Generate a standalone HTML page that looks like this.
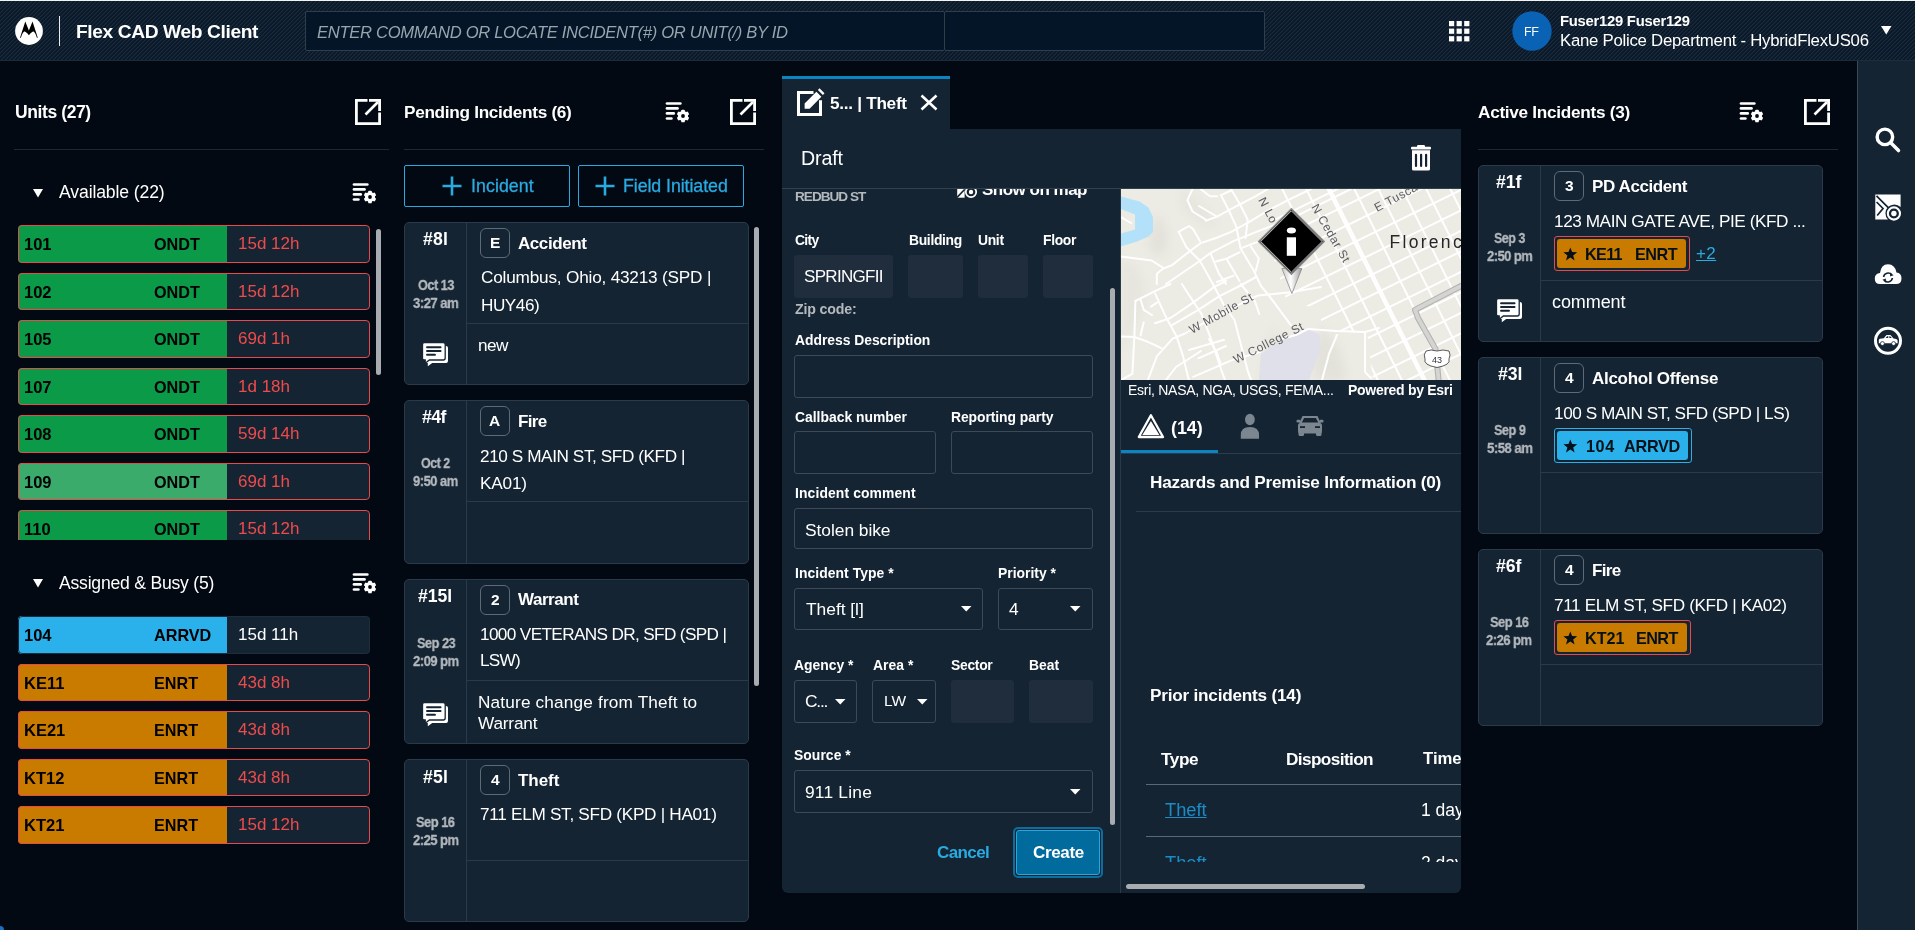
<!DOCTYPE html>
<html><head><meta charset="utf-8"><title>Flex CAD Web Client</title>
<style>
html,body{margin:0;padding:0;}
body{width:1915px;height:930px;overflow:hidden;background:#020912;font-family:"Liberation Sans",sans-serif;position:relative;}
div{position:absolute;}
.t{white-space:nowrap;will-change:transform;}
</style></head><body>
<div style="left:0;top:0;width:1915px;height:1px;background:#f2f2ee"></div>
<svg style="position:absolute;left:0;top:1px" width="1915" height="59" shape-rendering="crispEdges"><defs><pattern id="hs" width="4" height="4" patternUnits="userSpaceOnUse"><rect width="4" height="4" fill="#0a1929"/><rect x="3" y="0" width="1" height="1" fill="#1a2b3a"/><rect x="2" y="1" width="1" height="1" fill="#1a2b3a"/><rect x="1" y="2" width="1" height="1" fill="#1a2b3a"/><rect x="0" y="3" width="1" height="1" fill="#1a2b3a"/><rect x="0" y="0" width="1" height="1" fill="#122232"/><rect x="3" y="1" width="1" height="1" fill="#122232"/><rect x="2" y="2" width="1" height="1" fill="#122232"/><rect x="1" y="3" width="1" height="1" fill="#122232"/></pattern></defs><rect width="1915" height="59" fill="url(#hs)"/></svg>
<div style="left:0;top:60px;width:1915px;height:1px;background:#1d2c3a"></div>
<svg style="position:absolute;left:15px;top:17px" width="28" height="28" viewBox="0 0 28 28"><circle cx="14" cy="14" r="13.9" fill="#fff"/><path d="M5 20.8 L10.3 4.6 L13.9 13.4 L17.5 4.6 L22.8 20.8 L21.9 20.8 Q20.2 15.6 18.6 14.6 Q17.4 14 13.9 18.2 Q10.4 14 9.2 14.6 Q7.6 15.6 5.9 20.8 Z" fill="#000"/></svg>
<div style="left:59px;top:16px;width:1px;height:30px;background:#e8eaec"></div>
<div class="t" style="left:75.50px;top:12px;font-size:19.2px;line-height:40px;height:40px;color:#fff;font-weight:700;letter-spacing:-0.389px;">Flex CAD Web Client</div>
<div style="left:305px;top:11px;width:640px;height:40px;background:#031527;border:1px solid #2f3e4b;box-sizing:border-box;border-radius:2px"></div>
<div style="left:944px;top:11px;width:321px;height:40px;background:#031527;border:1px solid #2f3e4b;box-sizing:border-box;border-radius:2px"></div>
<div class="t" style="left:316.60px;top:13px;font-size:16.6px;line-height:40px;height:40px;color:#9aa4ad;font-style:italic;letter-spacing:-0.314px;">ENTER COMMAND OR LOCATE INCIDENT(#) OR UNIT(/) BY ID</div>
<svg style="position:absolute;left:1449px;top:21px" width="21" height="21" viewBox="0 0 21 21"><rect x="0.0" y="0.0" width="5.2" height="5.2" fill="#fff"/><rect x="7.6" y="0.0" width="5.2" height="5.2" fill="#fff"/><rect x="15.2" y="0.0" width="5.2" height="5.2" fill="#fff"/><rect x="0.0" y="7.6" width="5.2" height="5.2" fill="#fff"/><rect x="7.6" y="7.6" width="5.2" height="5.2" fill="#fff"/><rect x="15.2" y="7.6" width="5.2" height="5.2" fill="#fff"/><rect x="0.0" y="15.2" width="5.2" height="5.2" fill="#fff"/><rect x="7.6" y="15.2" width="5.2" height="5.2" fill="#fff"/><rect x="15.2" y="15.2" width="5.2" height="5.2" fill="#fff"/></svg>
<svg style="position:absolute;left:1512px;top:11px" width="40" height="40" viewBox="0 0 40 40"><circle cx="20" cy="20" r="19.7" fill="#0a62b4"/></svg>
<div class="t" style="left:1523.60px;top:12px;font-size:12.5px;line-height:40px;height:40px;color:#fff;letter-spacing:-0.300px;">FF</div>
<div class="t" style="left:1559.50px;top:1px;font-size:14.8px;line-height:40px;height:40px;color:#fff;font-weight:700;letter-spacing:-0.250px;">Fuser129 Fuser129</div>
<div class="t" style="left:1559.50px;top:21px;font-size:16.8px;line-height:40px;height:40px;color:#fff;letter-spacing:-0.263px;">Kane Police Department - HybridFlexUS06</div>
<svg style="position:absolute;left:1881px;top:26px" width="11" height="9" viewBox="0 0 11 9"><path d="M0 0 L10.5 0 L5.25 8.5 Z" fill="#fff"/></svg>
<div class="t" style="left:14.70px;top:92px;font-size:17.5px;line-height:40px;height:40px;color:#fff;font-weight:700;letter-spacing:-0.400px;">Units (27)</div>
<svg style="position:absolute;left:355px;top:99px" width="26" height="26" viewBox="0 0 26 26"><path d="M12.5 1.4 H1.4 V24.6 H24.6 V13.5" fill="none" stroke="#fff" stroke-width="2.8"/><path d="M10.5 15.5 L23 3" stroke="#fff" stroke-width="2.6"/><path d="M14 1.4 H24.6 V12" fill="none" stroke="#fff" stroke-width="2.8"/></svg>
<div style="left:14px;top:149px;width:375px;height:1px;background:#1c2835"></div>
<svg style="position:absolute;left:33px;top:189px" width="11" height="9" viewBox="0 0 11 9"><path d="M0 0 L10 0 L5 8.5 Z" fill="#fff"/></svg>
<div class="t" style="left:58.70px;top:172px;font-size:17.6px;line-height:40px;height:40px;color:#fff;letter-spacing:-0.123px;">Available (22)</div>
<svg style="position:absolute;left:352px;top:183px" width="26" height="22" viewBox="0 0 26 22"><g stroke="#fff" stroke-width="2.7" stroke-linecap="round"><path d="M2 1.5 H15.3"/><path d="M2 6.4 H12.5"/><path d="M2 11.4 H8.7"/><path d="M2 16.5 H6.4"/></g><circle cx="18" cy="14" r="7.6" fill="#020912"/><rect x="16.2" y="7.7" width="3.6" height="3" rx="0.9" fill="#fff" transform="rotate(0 18 14)"/><rect x="16.2" y="7.7" width="3.6" height="3" rx="0.9" fill="#fff" transform="rotate(60 18 14)"/><rect x="16.2" y="7.7" width="3.6" height="3" rx="0.9" fill="#fff" transform="rotate(120 18 14)"/><rect x="16.2" y="7.7" width="3.6" height="3" rx="0.9" fill="#fff" transform="rotate(180 18 14)"/><rect x="16.2" y="7.7" width="3.6" height="3" rx="0.9" fill="#fff" transform="rotate(240 18 14)"/><rect x="16.2" y="7.7" width="3.6" height="3" rx="0.9" fill="#fff" transform="rotate(300 18 14)"/><circle cx="18" cy="14" r="5.1" fill="#fff"/><circle cx="18" cy="14" r="1.9" fill="#020912"/></svg>
<div style="left:0;top:215px;width:376px;height:325px;overflow:hidden">
<div style="left:18px;top:10px;width:352px;height:38px;border-radius:4px;overflow:hidden"><div style="left:0;top:0;width:209px;height:100%;background:#0a9a48"></div><div style="left:209px;top:0;width:143px;height:100%;background:#142433"></div><div style="left:0;top:0;width:352px;height:38px;box-sizing:border-box;border:1px solid #e8494b;border-radius:4px"></div><div class="t" style="left:6px;top:-1px;font-size:16.5px;line-height:40px;font-weight:700;color:#000">101</div><div class="t" style="left:135.5px;top:-1px;font-size:16.2px;line-height:40px;font-weight:700;color:#000">ONDT</div><div class="t" style="left:219.5px;top:-1px;font-size:17px;line-height:40px;color:#f04b4b">15d 12h</div></div>
<div style="left:18px;top:58px;width:352px;height:37px;border-radius:4px;overflow:hidden"><div style="left:0;top:0;width:209px;height:100%;background:#0a9a48"></div><div style="left:209px;top:0;width:143px;height:100%;background:#142433"></div><div style="left:0;top:0;width:352px;height:37px;box-sizing:border-box;border:1px solid #e8494b;border-radius:4px"></div><div class="t" style="left:6px;top:-1px;font-size:16.5px;line-height:40px;font-weight:700;color:#000">102</div><div class="t" style="left:135.5px;top:-1px;font-size:16.2px;line-height:40px;font-weight:700;color:#000">ONDT</div><div class="t" style="left:219.5px;top:-1px;font-size:17px;line-height:40px;color:#f04b4b">15d 12h</div></div>
<div style="left:18px;top:105px;width:352px;height:38px;border-radius:4px;overflow:hidden"><div style="left:0;top:0;width:209px;height:100%;background:#0a9a48"></div><div style="left:209px;top:0;width:143px;height:100%;background:#142433"></div><div style="left:0;top:0;width:352px;height:38px;box-sizing:border-box;border:1px solid #e8494b;border-radius:4px"></div><div class="t" style="left:6px;top:-1px;font-size:16.5px;line-height:40px;font-weight:700;color:#000">105</div><div class="t" style="left:135.5px;top:-1px;font-size:16.2px;line-height:40px;font-weight:700;color:#000">ONDT</div><div class="t" style="left:219.5px;top:-1px;font-size:17px;line-height:40px;color:#f04b4b">69d 1h</div></div>
<div style="left:18px;top:153px;width:352px;height:37px;border-radius:4px;overflow:hidden"><div style="left:0;top:0;width:209px;height:100%;background:#0a9a48"></div><div style="left:209px;top:0;width:143px;height:100%;background:#142433"></div><div style="left:0;top:0;width:352px;height:37px;box-sizing:border-box;border:1px solid #e8494b;border-radius:4px"></div><div class="t" style="left:6px;top:-1px;font-size:16.5px;line-height:40px;font-weight:700;color:#000">107</div><div class="t" style="left:135.5px;top:-1px;font-size:16.2px;line-height:40px;font-weight:700;color:#000">ONDT</div><div class="t" style="left:219.5px;top:-1px;font-size:17px;line-height:40px;color:#f04b4b">1d 18h</div></div>
<div style="left:18px;top:200px;width:352px;height:38px;border-radius:4px;overflow:hidden"><div style="left:0;top:0;width:209px;height:100%;background:#0a9a48"></div><div style="left:209px;top:0;width:143px;height:100%;background:#142433"></div><div style="left:0;top:0;width:352px;height:38px;box-sizing:border-box;border:1px solid #e8494b;border-radius:4px"></div><div class="t" style="left:6px;top:-1px;font-size:16.5px;line-height:40px;font-weight:700;color:#000">108</div><div class="t" style="left:135.5px;top:-1px;font-size:16.2px;line-height:40px;font-weight:700;color:#000">ONDT</div><div class="t" style="left:219.5px;top:-1px;font-size:17px;line-height:40px;color:#f04b4b">59d 14h</div></div>
<div style="left:18px;top:248px;width:352px;height:37px;border-radius:4px;overflow:hidden"><div style="left:0;top:0;width:209px;height:100%;background:#3aab6a"></div><div style="left:209px;top:0;width:143px;height:100%;background:#142433"></div><div style="left:0;top:0;width:352px;height:37px;box-sizing:border-box;border:1px solid #e8494b;border-radius:4px"></div><div class="t" style="left:6px;top:-1px;font-size:16.5px;line-height:40px;font-weight:700;color:#000">109</div><div class="t" style="left:135.5px;top:-1px;font-size:16.2px;line-height:40px;font-weight:700;color:#000">ONDT</div><div class="t" style="left:219.5px;top:-1px;font-size:17px;line-height:40px;color:#f04b4b">69d 1h</div></div>
<div style="left:18px;top:295px;width:352px;height:38px;border-radius:4px;overflow:hidden"><div style="left:0;top:0;width:209px;height:100%;background:#0a9a48"></div><div style="left:209px;top:0;width:143px;height:100%;background:#142433"></div><div style="left:0;top:0;width:352px;height:38px;box-sizing:border-box;border:1px solid #e8494b;border-radius:4px"></div><div class="t" style="left:6px;top:-1px;font-size:16.5px;line-height:40px;font-weight:700;color:#000">110</div><div class="t" style="left:135.5px;top:-1px;font-size:16.2px;line-height:40px;font-weight:700;color:#000">ONDT</div><div class="t" style="left:219.5px;top:-1px;font-size:17px;line-height:40px;color:#f04b4b">15d 12h</div></div>
</div>
<div style="left:376px;top:229px;width:5px;height:146px;background:#a8acb0;border-radius:3px"></div>
<svg style="position:absolute;left:33px;top:579px" width="11" height="9" viewBox="0 0 11 9"><path d="M0 0 L10 0 L5 8.5 Z" fill="#fff"/></svg>
<div class="t" style="left:58.70px;top:563px;font-size:17.6px;line-height:40px;height:40px;color:#fff;letter-spacing:-0.222px;">Assigned &amp; Busy (5)</div>
<svg style="position:absolute;left:352px;top:573px" width="26" height="22" viewBox="0 0 26 22"><g stroke="#fff" stroke-width="2.7" stroke-linecap="round"><path d="M2 1.5 H15.3"/><path d="M2 6.4 H12.5"/><path d="M2 11.4 H8.7"/><path d="M2 16.5 H6.4"/></g><circle cx="18" cy="14" r="7.6" fill="#020912"/><rect x="16.2" y="7.7" width="3.6" height="3" rx="0.9" fill="#fff" transform="rotate(0 18 14)"/><rect x="16.2" y="7.7" width="3.6" height="3" rx="0.9" fill="#fff" transform="rotate(60 18 14)"/><rect x="16.2" y="7.7" width="3.6" height="3" rx="0.9" fill="#fff" transform="rotate(120 18 14)"/><rect x="16.2" y="7.7" width="3.6" height="3" rx="0.9" fill="#fff" transform="rotate(180 18 14)"/><rect x="16.2" y="7.7" width="3.6" height="3" rx="0.9" fill="#fff" transform="rotate(240 18 14)"/><rect x="16.2" y="7.7" width="3.6" height="3" rx="0.9" fill="#fff" transform="rotate(300 18 14)"/><circle cx="18" cy="14" r="5.1" fill="#fff"/><circle cx="18" cy="14" r="1.9" fill="#020912"/></svg>
<div style="left:18px;top:616px;width:352px;height:38px;border-radius:4px;overflow:hidden"><div style="left:0;top:0;width:209px;height:100%;background:#2ab0ea"></div><div style="left:209px;top:0;width:143px;height:100%;background:#142433"></div><div style="left:0;top:0;width:352px;height:38px;box-sizing:border-box;border:1px solid #1e2c3b;border-radius:4px"></div><div class="t" style="left:6px;top:-1px;font-size:16.5px;line-height:40px;font-weight:700;color:#000">104</div><div class="t" style="left:135.5px;top:-1px;font-size:16.2px;line-height:40px;font-weight:700;color:#000">ARRVD</div><div class="t" style="left:219.5px;top:-1px;font-size:17px;line-height:40px;color:#fff">15d 11h</div></div>
<div style="left:18px;top:664px;width:352px;height:37px;border-radius:4px;overflow:hidden"><div style="left:0;top:0;width:209px;height:100%;background:#c97b00"></div><div style="left:209px;top:0;width:143px;height:100%;background:#142433"></div><div style="left:0;top:0;width:352px;height:37px;box-sizing:border-box;border:1px solid #e8494b;border-radius:4px"></div><div class="t" style="left:6px;top:-1px;font-size:16.5px;line-height:40px;font-weight:700;color:#000">KE11</div><div class="t" style="left:135.5px;top:-1px;font-size:16.2px;line-height:40px;font-weight:700;color:#000">ENRT</div><div class="t" style="left:219.5px;top:-1px;font-size:17px;line-height:40px;color:#f04b4b">43d 8h</div></div>
<div style="left:18px;top:711px;width:352px;height:38px;border-radius:4px;overflow:hidden"><div style="left:0;top:0;width:209px;height:100%;background:#c97b00"></div><div style="left:209px;top:0;width:143px;height:100%;background:#142433"></div><div style="left:0;top:0;width:352px;height:38px;box-sizing:border-box;border:1px solid #e8494b;border-radius:4px"></div><div class="t" style="left:6px;top:-1px;font-size:16.5px;line-height:40px;font-weight:700;color:#000">KE21</div><div class="t" style="left:135.5px;top:-1px;font-size:16.2px;line-height:40px;font-weight:700;color:#000">ENRT</div><div class="t" style="left:219.5px;top:-1px;font-size:17px;line-height:40px;color:#f04b4b">43d 8h</div></div>
<div style="left:18px;top:759px;width:352px;height:37px;border-radius:4px;overflow:hidden"><div style="left:0;top:0;width:209px;height:100%;background:#c97b00"></div><div style="left:209px;top:0;width:143px;height:100%;background:#142433"></div><div style="left:0;top:0;width:352px;height:37px;box-sizing:border-box;border:1px solid #e8494b;border-radius:4px"></div><div class="t" style="left:6px;top:-1px;font-size:16.5px;line-height:40px;font-weight:700;color:#000">KT12</div><div class="t" style="left:135.5px;top:-1px;font-size:16.2px;line-height:40px;font-weight:700;color:#000">ENRT</div><div class="t" style="left:219.5px;top:-1px;font-size:17px;line-height:40px;color:#f04b4b">43d 8h</div></div>
<div style="left:18px;top:806px;width:352px;height:38px;border-radius:4px;overflow:hidden"><div style="left:0;top:0;width:209px;height:100%;background:#c97b00"></div><div style="left:209px;top:0;width:143px;height:100%;background:#142433"></div><div style="left:0;top:0;width:352px;height:38px;box-sizing:border-box;border:1px solid #e8494b;border-radius:4px"></div><div class="t" style="left:6px;top:-1px;font-size:16.5px;line-height:40px;font-weight:700;color:#000">KT21</div><div class="t" style="left:135.5px;top:-1px;font-size:16.2px;line-height:40px;font-weight:700;color:#000">ENRT</div><div class="t" style="left:219.5px;top:-1px;font-size:17px;line-height:40px;color:#f04b4b">15d 12h</div></div>
<div class="t" style="left:404.20px;top:92px;font-size:17.2px;line-height:40px;height:40px;color:#fff;font-weight:700;letter-spacing:-0.300px;">Pending Incidents (6)</div>
<svg style="position:absolute;left:665px;top:102px" width="26" height="22" viewBox="0 0 26 22"><g stroke="#fff" stroke-width="2.7" stroke-linecap="round"><path d="M2 1.5 H15.3"/><path d="M2 6.4 H12.5"/><path d="M2 11.4 H8.7"/><path d="M2 16.5 H6.4"/></g><circle cx="18" cy="14" r="7.6" fill="#020912"/><rect x="16.2" y="7.7" width="3.6" height="3" rx="0.9" fill="#fff" transform="rotate(0 18 14)"/><rect x="16.2" y="7.7" width="3.6" height="3" rx="0.9" fill="#fff" transform="rotate(60 18 14)"/><rect x="16.2" y="7.7" width="3.6" height="3" rx="0.9" fill="#fff" transform="rotate(120 18 14)"/><rect x="16.2" y="7.7" width="3.6" height="3" rx="0.9" fill="#fff" transform="rotate(180 18 14)"/><rect x="16.2" y="7.7" width="3.6" height="3" rx="0.9" fill="#fff" transform="rotate(240 18 14)"/><rect x="16.2" y="7.7" width="3.6" height="3" rx="0.9" fill="#fff" transform="rotate(300 18 14)"/><circle cx="18" cy="14" r="5.1" fill="#fff"/><circle cx="18" cy="14" r="1.9" fill="#020912"/></svg>
<svg style="position:absolute;left:730px;top:99px" width="26" height="26" viewBox="0 0 26 26"><path d="M12.5 1.4 H1.4 V24.6 H24.6 V13.5" fill="none" stroke="#fff" stroke-width="2.8"/><path d="M10.5 15.5 L23 3" stroke="#fff" stroke-width="2.6"/><path d="M14 1.4 H24.6 V12" fill="none" stroke="#fff" stroke-width="2.8"/></svg>
<div style="left:404px;top:149px;width:360px;height:1px;background:#1c2835"></div>
<div style="left:404px;top:165px;width:166px;height:42px;border:1px solid #29abe2;box-sizing:border-box;border-radius:2px"></div>
<svg style="position:absolute;left:442px;top:176px" width="20" height="20" viewBox="0 0 20 20"><path d="M10 0.5 V19.5 M0.5 10 H19.5" stroke="#29abe2" stroke-width="2.6"/></svg>
<div class="t" style="left:471.00px;top:166px;font-size:17.8px;line-height:40px;height:40px;color:#29abe2;letter-spacing:0.057px;-webkit-text-stroke:0.3px #29abe2">Incident</div>
<div style="left:578px;top:165px;width:166px;height:42px;border:1px solid #29abe2;box-sizing:border-box;border-radius:2px"></div>
<svg style="position:absolute;left:594.5px;top:176px" width="20" height="20" viewBox="0 0 20 20"><path d="M10 0.5 V19.5 M0.5 10 H19.5" stroke="#29abe2" stroke-width="2.6"/></svg>
<div class="t" style="left:623.20px;top:166px;font-size:17.8px;line-height:40px;height:40px;color:#29abe2;letter-spacing:-0.071px;-webkit-text-stroke:0.3px #29abe2">Field Initiated</div>
<div style="left:0;top:0;width:1915px;height:930px;overflow:hidden">
<div style="left:404px;top:222px;width:345px;height:163px;background:#142433;border:1px solid #2b3a4a;box-sizing:border-box;border-radius:5px"></div>
<div style="left:466px;top:223px;width:1px;height:161px;background:#2b3a4a"></div>
<div style="left:467px;top:323px;width:281px;height:1px;background:#2b3a4a"></div>
<div class="t" style="left:422.95px;top:219px;font-size:17.6px;line-height:40px;height:40px;color:#fff;font-weight:700;letter-spacing:0.250px;">#8l</div>
<div class="t" style="left:417.50px;top:265px;font-size:15.3px;line-height:40px;height:40px;color:#b4b9be;font-weight:700;letter-spacing:-0.600px;transform:scaleX(0.8318181818181819);transform-origin:0 0;-webkit-text-stroke:0.3px #b4b9be">Oct 13</div>
<div class="t" style="left:412.90px;top:283px;font-size:15.3px;line-height:40px;height:40px;color:#b4b9be;font-weight:700;letter-spacing:-0.600px;transform:scaleX(0.8576779026217228);transform-origin:0 0;-webkit-text-stroke:0.3px #b4b9be">3:27 am</div>
<svg style="position:absolute;left:422px;top:342px" width="28" height="26" viewBox="0 0 28 26"><path d="M4 4 H24 Q26 4 26 6 V19 Q26 21 24 21 H10.2 L5.8 24.2 V21 H4 Z" fill="#fff"/><path d="M2.5 0.6 H21.2 Q23.2 0.6 23.2 2.6 V16 Q23.2 18 21.2 18 H7.4 L3.2 21.2 V18 H2.5 Q0.5 18 0.5 16 V2.6 Q0.5 0.6 2.5 0.6 Z" fill="#fff" stroke="#142433" stroke-width="1.3"/><path d="M5 5.3 H18.6 M5 9 H18.6 M5 12.8 H13" stroke="#142433" stroke-width="1.9" stroke-linecap="round"/></svg>
<div style="left:480px;top:228px;width:30px;height:30px;border:1px solid #5d6b78;box-sizing:border-box;border-radius:6px"></div>
<div class="t" style="left:489.50px;top:223px;font-size:15.5px;line-height:40px;height:40px;color:#fff;font-weight:700;">E</div>
<div class="t" style="left:517.80px;top:224px;font-size:17px;line-height:40px;height:40px;color:#fff;font-weight:700;letter-spacing:-0.429px;">Accident</div>
<div class="t" style="left:480.50px;top:257px;font-size:17.2px;line-height:40px;height:40px;color:#fff;letter-spacing:-0.196px;">Columbus, Ohio, 43213 (SPD |</div>
<div class="t" style="left:480.50px;top:285px;font-size:17.2px;line-height:40px;height:40px;color:#fff;letter-spacing:-0.480px;">HUY46)</div>
<div class="t" style="left:477.70px;top:325px;font-size:17.2px;line-height:40px;height:40px;color:#fff;letter-spacing:-0.500px;">new</div>
<div style="left:404px;top:400px;width:345px;height:164px;background:#142433;border:1px solid #2b3a4a;box-sizing:border-box;border-radius:5px"></div>
<div style="left:466px;top:401px;width:1px;height:162px;background:#2b3a4a"></div>
<div style="left:467px;top:501px;width:281px;height:1px;background:#2b3a4a"></div>
<div class="t" style="left:422.10px;top:397px;font-size:17.6px;line-height:40px;height:40px;color:#fff;font-weight:700;letter-spacing:-0.500px;">#4f</div>
<div class="t" style="left:421.30px;top:443px;font-size:15.3px;line-height:40px;height:40px;color:#b4b9be;font-weight:700;letter-spacing:-0.600px;transform:scaleX(0.8146067415730337);transform-origin:0 0;-webkit-text-stroke:0.3px #b4b9be">Oct 2</div>
<div class="t" style="left:413.15px;top:461px;font-size:15.3px;line-height:40px;height:40px;color:#b4b9be;font-weight:700;letter-spacing:-0.600px;transform:scaleX(0.848314606741573);transform-origin:0 0;-webkit-text-stroke:0.3px #b4b9be">9:50 am</div>
<div style="left:480px;top:406px;width:30px;height:30px;border:1px solid #5d6b78;box-sizing:border-box;border-radius:6px"></div>
<div class="t" style="left:489.00px;top:401px;font-size:15.5px;line-height:40px;height:40px;color:#fff;font-weight:700;">A</div>
<div class="t" style="left:517.80px;top:402px;font-size:17px;line-height:40px;height:40px;color:#fff;font-weight:700;letter-spacing:-0.667px;">Fire</div>
<div class="t" style="left:480.30px;top:436px;font-size:17.2px;line-height:40px;height:40px;color:#fff;letter-spacing:-0.417px;">210 S MAIN ST, SFD (KFD |</div>
<div class="t" style="left:480.30px;top:463px;font-size:17.2px;line-height:40px;height:40px;color:#fff;letter-spacing:-0.175px;">KA01)</div>
<div style="left:404px;top:579px;width:345px;height:165px;background:#142433;border:1px solid #2b3a4a;box-sizing:border-box;border-radius:5px"></div>
<div style="left:466px;top:580px;width:1px;height:163px;background:#2b3a4a"></div>
<div style="left:467px;top:680px;width:281px;height:1px;background:#2b3a4a"></div>
<div class="t" style="left:418.00px;top:576px;font-size:17.6px;line-height:40px;height:40px;color:#fff;font-weight:700;letter-spacing:0.000px;">#15l</div>
<div class="t" style="left:416.60px;top:623px;font-size:15.3px;line-height:40px;height:40px;color:#b4b9be;font-weight:700;letter-spacing:-0.600px;transform:scaleX(0.8347826086956521);transform-origin:0 0;-webkit-text-stroke:0.3px #b4b9be">Sep 23</div>
<div class="t" style="left:412.60px;top:641px;font-size:15.3px;line-height:40px;height:40px;color:#b4b9be;font-weight:700;letter-spacing:-0.600px;transform:scaleX(0.8529411764705882);transform-origin:0 0;-webkit-text-stroke:0.3px #b4b9be">2:09 pm</div>
<div style="left:480px;top:585px;width:30px;height:30px;border:1px solid #5d6b78;box-sizing:border-box;border-radius:6px"></div>
<div class="t" style="left:490.50px;top:580px;font-size:15.5px;line-height:40px;height:40px;color:#fff;font-weight:700;">2</div>
<div class="t" style="left:517.80px;top:580px;font-size:17px;line-height:40px;height:40px;color:#fff;font-weight:700;letter-spacing:-0.467px;">Warrant</div>
<div class="t" style="left:480.30px;top:614px;font-size:17.2px;line-height:40px;height:40px;color:#fff;letter-spacing:-0.641px;">1000 VETERANS DR, SFD (SPD |</div>
<div class="t" style="left:480.30px;top:640px;font-size:17.2px;line-height:40px;height:40px;color:#fff;letter-spacing:-0.767px;">LSW)</div>
<svg style="position:absolute;left:422px;top:701.5px" width="28" height="26" viewBox="0 0 28 26"><path d="M4 4 H24 Q26 4 26 6 V19 Q26 21 24 21 H10.2 L5.8 24.2 V21 H4 Z" fill="#fff"/><path d="M2.5 0.6 H21.2 Q23.2 0.6 23.2 2.6 V16 Q23.2 18 21.2 18 H7.4 L3.2 21.2 V18 H2.5 Q0.5 18 0.5 16 V2.6 Q0.5 0.6 2.5 0.6 Z" fill="#fff" stroke="#142433" stroke-width="1.3"/><path d="M5 5.3 H18.6 M5 9 H18.6 M5 12.8 H13" stroke="#142433" stroke-width="1.9" stroke-linecap="round"/></svg>
<div class="t" style="left:478.30px;top:682px;font-size:17.2px;line-height:40px;height:40px;color:#fff;letter-spacing:0.173px;">Nature change from Theft to</div>
<div class="t" style="left:478.30px;top:703px;font-size:17.2px;line-height:40px;height:40px;color:#fff;letter-spacing:-0.167px;">Warrant</div>
<div style="left:404px;top:759px;width:345px;height:163px;background:#142433;border:1px solid #2b3a4a;box-sizing:border-box;border-radius:5px"></div>
<div style="left:466px;top:760px;width:1px;height:161px;background:#2b3a4a"></div>
<div style="left:467px;top:860px;width:281px;height:1px;background:#2b3a4a"></div>
<div class="t" style="left:422.75px;top:757px;font-size:17.6px;line-height:40px;height:40px;color:#fff;font-weight:700;letter-spacing:0.250px;">#5l</div>
<div class="t" style="left:416.45px;top:802px;font-size:15.3px;line-height:40px;height:40px;color:#b4b9be;font-weight:700;letter-spacing:-0.600px;transform:scaleX(0.841304347826087);transform-origin:0 0;-webkit-text-stroke:0.3px #b4b9be">Sep 16</div>
<div class="t" style="left:412.65px;top:820px;font-size:15.3px;line-height:40px;height:40px;color:#b4b9be;font-weight:700;letter-spacing:-0.600px;transform:scaleX(0.8511029411764706);transform-origin:0 0;-webkit-text-stroke:0.3px #b4b9be">2:25 pm</div>
<div style="left:480px;top:765px;width:30px;height:30px;border:1px solid #5d6b78;box-sizing:border-box;border-radius:6px"></div>
<div class="t" style="left:490.50px;top:760px;font-size:15.5px;line-height:40px;height:40px;color:#fff;font-weight:700;">4</div>
<div class="t" style="left:517.80px;top:761px;font-size:17px;line-height:40px;height:40px;color:#fff;font-weight:700;letter-spacing:-0.050px;">Theft</div>
<div class="t" style="left:479.80px;top:794px;font-size:17.2px;line-height:40px;height:40px;color:#fff;letter-spacing:-0.296px;">711 ELM ST, SFD (KPD | HA01)</div>
</div>
<div style="left:754px;top:227px;width:5px;height:459px;background:#a8acb0;border-radius:3px"></div>
<div style="left:782px;top:76px;width:168px;height:53px;background:#142433"></div>
<div style="left:782px;top:76px;width:168px;height:3px;background:#0a84c2"></div>
<svg style="position:absolute;left:796px;top:88px" width="30" height="29" viewBox="0 0 30 29"><path d="M17.5 4.4 H2.5 V26.4 H24.5 V12.2" fill="none" stroke="#fff" stroke-width="3"/><path d="M8.6 20.7 V15.5 L20.4 3.7 L25.4 8.7 L13.6 20.7 Z" fill="#fff"/><path d="M21.9 1.9 L23.5 0.3 L28.5 5.3 L26.9 6.9 Z" fill="#fff"/></svg>
<div class="t" style="left:829.50px;top:83px;font-size:17.2px;line-height:40px;height:40px;color:#fff;font-weight:700;letter-spacing:-0.291px;">5... | Theft</div>
<svg style="position:absolute;left:920px;top:94px" width="18" height="17" viewBox="0 0 18 17"><path d="M1.5 1.5 L16.5 15.5 M16.5 1.5 L1.5 15.5" stroke="#fff" stroke-width="2.6"/></svg>
<div style="left:782px;top:129px;width:679px;height:764px;background:#142433;border-radius:0 0 6px 6px"></div>
<div class="t" style="left:801.00px;top:138px;font-size:19.6px;line-height:40px;height:40px;color:#fff;letter-spacing:-0.125px;">Draft</div>
<svg style="position:absolute;left:1411px;top:144px" width="21" height="28" viewBox="0 0 21 28"><rect x="0" y="2.8" width="20" height="2.6" rx="1" fill="#fff"/><rect x="6" y="1" width="8" height="3" rx="1.2" fill="#fff"/><path d="M1 6.3 H19 V25 Q19 26.6 17.4 26.6 H2.6 Q1 26.6 1 25 Z" fill="#fff"/><path d="M5 10.8 V22 M10.1 10.8 V22 M15.1 10.8 V22" stroke="#142433" stroke-width="2.2" stroke-linecap="round"/></svg>
<div style="left:782px;top:188px;width:679px;height:1px;background:#33414f"></div>
<div style="left:782px;top:189px;width:338px;height:704px;overflow:hidden">
<div class="t" style="left:12.70px;top:-12px;font-size:13.6px;line-height:40px;height:40px;color:#b4b9be;font-weight:700;letter-spacing:-1.000px;">REDBUD ST</div>
<svg style="position:absolute;left:175px;top:-9px" width="22" height="20"><rect x="0.2" y="8.3" width="7.4" height="9.4" fill="#fff"/><path d="M0 17.5 L7.6 9.5" stroke="#142433" stroke-width="1.6"/><circle cx="14" cy="12" r="5.2" fill="none" stroke="#fff" stroke-width="1.7"/><circle cx="14" cy="12" r="2.2" fill="#fff"/></svg>
<div class="t" style="left:200.00px;top:-19px;font-size:17px;line-height:40px;height:40px;color:#fff;font-weight:700;letter-spacing:-0.500px;">Show on map</div>
<div class="t" style="left:12.50px;top:31px;font-size:13.9px;line-height:40px;height:40px;color:#fff;font-weight:700;letter-spacing:-0.667px;">City</div>
<div class="t" style="left:126.50px;top:31px;font-size:13.9px;line-height:40px;height:40px;color:#fff;font-weight:700;letter-spacing:-0.329px;">Building</div>
<div class="t" style="left:196.00px;top:31px;font-size:13.9px;line-height:40px;height:40px;color:#fff;font-weight:700;letter-spacing:-0.333px;">Unit</div>
<div class="t" style="left:261.00px;top:31px;font-size:13.9px;line-height:40px;height:40px;color:#fff;font-weight:700;letter-spacing:-0.350px;">Floor</div>
<div style="left:12px;top:66px;width:99px;height:43px;background:#1f2d3c;border-radius:3px"></div>
<div style="left:126px;top:66px;width:55px;height:43px;background:#1f2d3c;border-radius:3px"></div>
<div style="left:196px;top:66px;width:50px;height:43px;background:#1f2d3c;border-radius:3px"></div>
<div style="left:261px;top:66px;width:50px;height:43px;background:#1f2d3c;border-radius:3px"></div>
<div class="t" style="left:22.30px;top:68px;font-size:17px;line-height:40px;height:40px;color:#fff;letter-spacing:-0.688px;">SPRINGFII</div>
<div class="t" style="left:12.50px;top:100px;font-size:14.2px;line-height:40px;height:40px;color:#b4b9be;font-weight:700;letter-spacing:-0.162px;">Zip code:</div>
<div class="t" style="left:12.50px;top:131px;font-size:13.9px;line-height:40px;height:40px;color:#fff;font-weight:700;letter-spacing:-0.028px;">Address Description</div>
<div style="left:12px;top:166px;width:299px;height:43px;border:1px solid #3c4a57;box-sizing:border-box;border-radius:3px"></div>
<div class="t" style="left:12.50px;top:208px;font-size:13.9px;line-height:40px;height:40px;color:#fff;font-weight:700;letter-spacing:0.000px;">Callback number</div>
<div class="t" style="left:169.00px;top:208px;font-size:13.9px;line-height:40px;height:40px;color:#fff;font-weight:700;letter-spacing:-0.071px;">Reporting party</div>
<div style="left:12px;top:242px;width:142px;height:43px;border:1px solid #3c4a57;box-sizing:border-box;border-radius:3px"></div>
<div style="left:169px;top:242px;width:142px;height:43px;border:1px solid #3c4a57;box-sizing:border-box;border-radius:3px"></div>
<div class="t" style="left:12.50px;top:284px;font-size:13.9px;line-height:40px;height:40px;color:#fff;font-weight:700;letter-spacing:0.113px;">Incident comment</div>
<div style="left:12px;top:319px;width:299px;height:41px;border:1px solid #3c4a57;box-sizing:border-box;border-radius:3px"></div>
<div class="t" style="left:23.00px;top:321px;font-size:17.4px;line-height:40px;height:40px;color:#fff;letter-spacing:-0.050px;">Stolen bike</div>
<div class="t" style="left:12.50px;top:364px;font-size:13.9px;line-height:40px;height:40px;color:#fff;font-weight:700;letter-spacing:0.071px;">Incident Type *</div>
<div class="t" style="left:216.20px;top:364px;font-size:13.9px;line-height:40px;height:40px;color:#fff;font-weight:700;letter-spacing:0.000px;">Priority *</div>
<div style="left:12px;top:399px;width:189px;height:42px;border:1px solid #3c4a57;box-sizing:border-box;border-radius:3px"></div>
<div style="left:216px;top:399px;width:95px;height:42px;border:1px solid #3c4a57;box-sizing:border-box;border-radius:3px"></div>
<div class="t" style="left:23.80px;top:400px;font-size:17.4px;line-height:40px;height:40px;color:#fff;letter-spacing:-0.025px;">Theft [l]</div>
<div class="t" style="left:226.80px;top:400px;font-size:17.3px;line-height:40px;height:40px;color:#fff;">4</div>
<svg style="position:absolute;left:179px;top:416.5px" width="11" height="6"><path d="M0 0 H10.5 L5.25 5.5 Z" fill="#fff"/></svg>
<svg style="position:absolute;left:288px;top:416.5px" width="11" height="6"><path d="M0 0 H10.5 L5.25 5.5 Z" fill="#fff"/></svg>
<div class="t" style="left:12.20px;top:456px;font-size:13.9px;line-height:40px;height:40px;color:#fff;font-weight:700;letter-spacing:0.000px;">Agency *</div>
<div class="t" style="left:90.60px;top:456px;font-size:13.9px;line-height:40px;height:40px;color:#fff;font-weight:700;letter-spacing:0.060px;">Area *</div>
<div class="t" style="left:169.00px;top:456px;font-size:13.9px;line-height:40px;height:40px;color:#fff;font-weight:700;letter-spacing:-0.300px;">Sector</div>
<div class="t" style="left:247.40px;top:456px;font-size:13.9px;line-height:40px;height:40px;color:#fff;font-weight:700;letter-spacing:0.000px;">Beat</div>
<div style="left:12px;top:491px;width:63px;height:43px;border:1px solid #3c4a57;box-sizing:border-box;border-radius:3px"></div>
<div style="left:90px;top:491px;width:64px;height:43px;border:1px solid #3c4a57;box-sizing:border-box;border-radius:3px"></div>
<div style="left:169px;top:491px;width:63px;height:43px;background:#1f2d3c;border-radius:3px"></div>
<div style="left:247px;top:491px;width:64px;height:43px;background:#1f2d3c;border-radius:3px"></div>
<div class="t" style="left:23.00px;top:492px;font-size:17.4px;line-height:40px;height:40px;color:#fff;letter-spacing:-1.200px;">C...</div>
<svg style="position:absolute;left:53px;top:509.5px" width="11" height="6"><path d="M0 0 H10.5 L5.25 5.5 Z" fill="#fff"/></svg>
<div class="t" style="left:101.90px;top:492px;font-size:15.5px;line-height:40px;height:40px;color:#fff;">LW</div>
<svg style="position:absolute;left:135px;top:509.5px" width="11" height="6"><path d="M0 0 H10.5 L5.25 5.5 Z" fill="#fff"/></svg>
<div class="t" style="left:12.20px;top:546px;font-size:13.9px;line-height:40px;height:40px;color:#fff;font-weight:700;letter-spacing:0.057px;">Source *</div>
<div style="left:12px;top:581px;width:299px;height:43px;border:1px solid #3c4a57;box-sizing:border-box;border-radius:3px"></div>
<div class="t" style="left:23.20px;top:583px;font-size:17.4px;line-height:40px;height:40px;color:#fff;letter-spacing:0.200px;">911 Line</div>
<svg style="position:absolute;left:288px;top:599.5px" width="11" height="6"><path d="M0 0 H10.5 L5.25 5.5 Z" fill="#fff"/></svg>
<div class="t" style="left:155.00px;top:644px;font-size:17px;line-height:40px;height:40px;color:#29abe2;font-weight:700;letter-spacing:-0.600px;">Cancel</div>
<div style="left:231px;top:638px;width:90px;height:51px;border:2px solid #0a6fa0;box-sizing:border-box;border-radius:5px"></div>
<div style="left:234px;top:641px;width:84px;height:45px;background:#006b9c;border:1px solid #29a7dc;box-sizing:border-box;border-radius:3px"></div>
<div class="t" style="left:250.60px;top:644px;font-size:17px;line-height:40px;height:40px;color:#fff;font-weight:700;letter-spacing:-0.340px;">Create</div>
</div>
<div style="left:1110px;top:288px;width:5px;height:537px;background:#a8acb0;border-radius:3px"></div>
<div style="left:1120px;top:189px;width:1px;height:704px;background:#2b3a49"></div>
<svg style="position:absolute;left:1121px;top:189px" width="340" height="191" id="mapsvg"><defs><filter id="bl" x="-50%" y="-50%" width="200%" height="200%"><feGaussianBlur stdDeviation="4"/></filter><clipPath id="mclip"><rect width="340" height="191"/></clipPath></defs><g clip-path="url(#mclip)"><rect width="340" height="191" fill="#ecebe4"/><g filter="url(#bl)" opacity="0.45"><path d="M35 25 Q50 40 45 60 Q40 70 30 62 Q25 45 35 25 Z" fill="#d9d7cf"/><path d="M0 70 Q30 80 20 120 Q10 150 0 160 Z" fill="#d9d7cf" opacity="0.6"/><path d="M200 140 Q220 150 225 191 L195 191 Q190 160 200 140 Z" fill="#d9d7cf"/><path d="M150 140 Q170 150 160 191 L140 191 Z" fill="#d9d7cf" opacity="0.5"/><path d="M60 0 Q90 20 95 40 Q80 35 62 20 Z" fill="#d9d7cf" opacity="0.6"/></g><path d="M0 7.5 L18.6 12.4 L27.4 18.6 L32 27.9 L32 43 L27.4 47.5 L15.5 52.7 L0 57.3 L0 44.5 L14 40.5 L14 25.5 L0 20 Z" fill="#b3e1f9"/><path d="M138 191 L140 165 L150 158 L170 146 L185 140 L198 145 L200 160 L188 191 Z" fill="#dfe0e9"/><clipPath id="gclip"><path d="M150 0 H340 V191 H252 L246 144 L205 142 L195 120 L165 110 L150 60 Z"/></clipPath><g clip-path="url(#gclip)"><path d="M150.0 32.6 L340.0 -60.5" fill="none" stroke="#ffffff" stroke-width="2.0" stroke-linejoin="round" stroke-linecap="round"/><path d="M150.0 53.1 L340.0 -40.0" fill="none" stroke="#ffffff" stroke-width="2.0" stroke-linejoin="round" stroke-linecap="round"/><path d="M150.0 73.6 L340.0 -19.5" fill="none" stroke="#ffffff" stroke-width="2.0" stroke-linejoin="round" stroke-linecap="round"/><path d="M150.0 94.1 L340.0 1.0" fill="none" stroke="#ffffff" stroke-width="2.0" stroke-linejoin="round" stroke-linecap="round"/><path d="M150.0 114.6 L340.0 21.5" fill="none" stroke="#ffffff" stroke-width="2.0" stroke-linejoin="round" stroke-linecap="round"/><path d="M150.0 135.1 L340.0 42.0" fill="none" stroke="#ffffff" stroke-width="2.0" stroke-linejoin="round" stroke-linecap="round"/><path d="M150.0 155.6 L340.0 62.5" fill="none" stroke="#ffffff" stroke-width="2.0" stroke-linejoin="round" stroke-linecap="round"/><path d="M150.0 176.1 L340.0 83.0" fill="none" stroke="#ffffff" stroke-width="2.0" stroke-linejoin="round" stroke-linecap="round"/><path d="M150.0 196.6 L340.0 103.5" fill="none" stroke="#ffffff" stroke-width="2.0" stroke-linejoin="round" stroke-linecap="round"/><path d="M150.0 217.1 L340.0 124.0" fill="none" stroke="#ffffff" stroke-width="2.0" stroke-linejoin="round" stroke-linecap="round"/><path d="M150.0 237.6 L340.0 144.5" fill="none" stroke="#ffffff" stroke-width="2.0" stroke-linejoin="round" stroke-linecap="round"/><path d="M150.0 258.1 L340.0 165.0" fill="none" stroke="#ffffff" stroke-width="2.0" stroke-linejoin="round" stroke-linecap="round"/><path d="M161.3 0.0 L256.8 191.0" fill="none" stroke="#ffffff" stroke-width="2.0" stroke-linejoin="round" stroke-linecap="round"/><path d="M185.3 0.0 L280.8 191.0" fill="none" stroke="#ffffff" stroke-width="2.0" stroke-linejoin="round" stroke-linecap="round"/><path d="M209.3 0.0 L304.8 191.0" fill="none" stroke="#ffffff" stroke-width="2.0" stroke-linejoin="round" stroke-linecap="round"/><path d="M233.3 0.0 L328.8 191.0" fill="none" stroke="#ffffff" stroke-width="2.0" stroke-linejoin="round" stroke-linecap="round"/><path d="M257.3 0.0 L352.8 191.0" fill="none" stroke="#ffffff" stroke-width="2.0" stroke-linejoin="round" stroke-linecap="round"/><path d="M281.3 0.0 L376.8 191.0" fill="none" stroke="#ffffff" stroke-width="2.0" stroke-linejoin="round" stroke-linecap="round"/><path d="M305.3 0.0 L400.8 191.0" fill="none" stroke="#ffffff" stroke-width="2.0" stroke-linejoin="round" stroke-linecap="round"/><path d="M329.3 0.0 L424.8 191.0" fill="none" stroke="#ffffff" stroke-width="2.0" stroke-linejoin="round" stroke-linecap="round"/><path d="M353.3 0.0 L448.8 191.0" fill="none" stroke="#ffffff" stroke-width="2.0" stroke-linejoin="round" stroke-linecap="round"/></g><path d="M206.8 0.0 L302.3 191.0" fill="none" stroke="#ffffff" stroke-width="2.6" stroke-linejoin="round" stroke-linecap="round"/><path d="M0.0 67.4 L30.6 71.5 L41.9 78.7" fill="none" stroke="#ffffff" stroke-width="2.0" stroke-linejoin="round" stroke-linecap="round"/><path d="M35.8 95.0 L35.8 84.8 L41.9 79.7 L51.0 76.1 L67.4 63.3 L79.7 54.1 L95.0 49.0 L110.3 42.9 L128.7 32.7 L149.0 20.4 L170.0 9.7 L190.0 0.0" fill="none" stroke="#ffffff" stroke-width="2.0" stroke-linejoin="round" stroke-linecap="round"/><path d="M45.0 95.0 L76.6 73.5 L88.9 64.4 L112.4 52.1 L137.9 41.9 L170.0 29.6 L230.0 0.0" fill="none" stroke="#ffffff" stroke-width="2.0" stroke-linejoin="round" stroke-linecap="round"/><path d="M84.8 31.7 L96.0 27.6 L109.3 20.4 L134.8 7.2 L147.0 0.0" fill="none" stroke="#ffffff" stroke-width="2.0" stroke-linejoin="round" stroke-linecap="round"/><path d="M100.0 6.1 L110.0 1.5" fill="none" stroke="#ffffff" stroke-width="2.0" stroke-linejoin="round" stroke-linecap="round"/><path d="M57.7 42.9 L65.4 58.2 L78.7 71.5 L91.9 95.0 L104.0 118.0 L113.5 131.0 L127.0 182.7 L130.0 191.0" fill="none" stroke="#ffffff" stroke-width="2.0" stroke-linejoin="round" stroke-linecap="round"/><path d="M100.0 6.1 L108.3 22.5 L115.4 37.8 L119.5 59.2 L132.8 81.7 L140.0 97.0 L148.6 107.4 L170.0 136.3" fill="none" stroke="#ffffff" stroke-width="2.0" stroke-linejoin="round" stroke-linecap="round"/><path d="M110.0 0.0 L119.5 16.3 L126.7 30.6 L124.6 49.0" fill="none" stroke="#ffffff" stroke-width="2.0" stroke-linejoin="round" stroke-linecap="round"/><path d="M71.5 0.0 L66.4 11.2 L71.5 22.5 L84.8 30.6" fill="none" stroke="#ffffff" stroke-width="2.0" stroke-linejoin="round" stroke-linecap="round"/><path d="M57.7 42.9 L68.0 37.0 L72.0 40.0 L79.0 52.0" fill="none" stroke="#ffffff" stroke-width="2.0" stroke-linejoin="round" stroke-linecap="round"/><path d="M78.0 17.0 L95.0 27.0" fill="none" stroke="#ffffff" stroke-width="2.0" stroke-linejoin="round" stroke-linecap="round"/><path d="M89.9 65.4 L98.0 84.8 L105.0 95.0" fill="none" stroke="#ffffff" stroke-width="2.0" stroke-linejoin="round" stroke-linecap="round"/><path d="M95.0 72.5 L106.0 69.5 L118.5 63.3" fill="none" stroke="#ffffff" stroke-width="2.0" stroke-linejoin="round" stroke-linecap="round"/><path d="M106.0 70.5 L118.5 92.0" fill="none" stroke="#ffffff" stroke-width="2.0" stroke-linejoin="round" stroke-linecap="round"/><path d="M96.0 93.0 L112.4 86.8" fill="none" stroke="#ffffff" stroke-width="2.0" stroke-linejoin="round" stroke-linecap="round"/><path d="M120.5 59.2 L132.8 54.1 L140.0 52.0" fill="none" stroke="#ffffff" stroke-width="2.0" stroke-linejoin="round" stroke-linecap="round"/><path d="M129.7 57.2 L137.9 69.5 L134.8 81.7" fill="none" stroke="#ffffff" stroke-width="2.0" stroke-linejoin="round" stroke-linecap="round"/><path d="M79.7 0.0 L88.9 7.2 L96.0 7.2" fill="none" stroke="#ffffff" stroke-width="2.0" stroke-linejoin="round" stroke-linecap="round"/><path d="M0.0 147.6 L13.4 148.0 L26.8 152.8 L40.2 159.0" fill="none" stroke="#ffffff" stroke-width="2.0" stroke-linejoin="round" stroke-linecap="round"/><path d="M14.4 112.5 L13.4 146.6 L11.4 184.8 L0.0 191.0" fill="none" stroke="#ffffff" stroke-width="2.0" stroke-linejoin="round" stroke-linecap="round"/><path d="M14.4 112.0 L34.0 102.2 L49.5 95.0" fill="none" stroke="#ffffff" stroke-width="2.0" stroke-linejoin="round" stroke-linecap="round"/><path d="M19.6 110.5 L22.7 120.8 L31.0 126.0" fill="none" stroke="#ffffff" stroke-width="2.0" stroke-linejoin="round" stroke-linecap="round"/><path d="M30.0 117.7 L36.0 113.6" fill="none" stroke="#ffffff" stroke-width="2.0" stroke-linejoin="round" stroke-linecap="round"/><path d="M19.6 146.6 L22.7 133.2" fill="none" stroke="#ffffff" stroke-width="2.0" stroke-linejoin="round" stroke-linecap="round"/><path d="M26.8 191.0 L36.0 167.2 L51.6 149.7 L64.0 144.5 L82.6 134.2 L103.2 123.9 L123.8 112.5 L137.3 106.4 L170.0 103.3 L200.0 98.0" fill="none" stroke="#ffffff" stroke-width="2.0" stroke-linejoin="round" stroke-linecap="round"/><path d="M34.0 134.2 L49.5 129.0 L72.2 113.6 L92.9 98.1 L105.0 92.0" fill="none" stroke="#ffffff" stroke-width="2.0" stroke-linejoin="round" stroke-linecap="round"/><path d="M50.6 136.3 L77.4 120.8 L98.0 107.4 L118.7 97.0 L135.0 88.0" fill="none" stroke="#ffffff" stroke-width="2.0" stroke-linejoin="round" stroke-linecap="round"/><path d="M34.0 104.3 L45.4 129.0 L55.7 147.6 L62.0 167.0 L67.0 188.0 L68.0 191.0" fill="none" stroke="#ffffff" stroke-width="2.0" stroke-linejoin="round" stroke-linecap="round"/><path d="M60.9 95.0 L72.2 112.5 L80.5 125.0" fill="none" stroke="#ffffff" stroke-width="2.0" stroke-linejoin="round" stroke-linecap="round"/><path d="M119.7 95.0 L134.0 112.5 L138.3 125.0" fill="none" stroke="#ffffff" stroke-width="2.0" stroke-linejoin="round" stroke-linecap="round"/><path d="M77.4 169.3 L105.0 157.0" fill="none" stroke="#ffffff" stroke-width="2.0" stroke-linejoin="round" stroke-linecap="round"/><path d="M68.0 161.0 L103.0 150.7" fill="none" stroke="#ffffff" stroke-width="2.0" stroke-linejoin="round" stroke-linecap="round"/><path d="M72.2 187.9 L110.4 171.4 L139.3 163.0" fill="none" stroke="#ffffff" stroke-width="2.0" stroke-linejoin="round" stroke-linecap="round"/><path d="M45.0 191.0 L55.0 178.0 L80.0 162.0" fill="none" stroke="#ffffff" stroke-width="2.0" stroke-linejoin="round" stroke-linecap="round"/><path d="M80.5 125.0 L90.0 150.0 L100.0 180.0 L104.0 191.0" fill="none" stroke="#ffffff" stroke-width="2.0" stroke-linejoin="round" stroke-linecap="round"/><path d="M88.0 150.0 L96.0 164.0 L100.0 176.0" fill="none" stroke="#ffffff" stroke-width="2.0" stroke-linejoin="round" stroke-linecap="round"/><path d="M0.0 28.0 L10.0 34.0" fill="none" stroke="#ffffff" stroke-width="2.0" stroke-linejoin="round" stroke-linecap="round"/><path d="M187.0 140.0 L216.0 142.0 L244.0 143.0 L258.0 139.0" fill="none" stroke="#ffffff" stroke-width="2.0" stroke-linejoin="round" stroke-linecap="round"/><path d="M216.0 146.0 L208.0 165.0 L201.0 191.0" fill="none" stroke="#ffffff" stroke-width="2.0" stroke-linejoin="round" stroke-linecap="round"/><path d="M244.0 143.0 L244.0 183.0 L250.0 189.0" fill="none" stroke="#ffffff" stroke-width="2.0" stroke-linejoin="round" stroke-linecap="round"/><path d="M160.0 150.0 L175.0 146.0 L187.0 140.0" fill="none" stroke="#ffffff" stroke-width="2.0" stroke-linejoin="round" stroke-linecap="round"/><path d="M340.0 97.0 L294.0 120.8 L297.0 129.0 L314.5 160.0 L317.6 191.0" fill="none" stroke="#b2b2b0" stroke-width="6.0" stroke-linejoin="round" stroke-linecap="round"/><path d="M340.0 97.0 L294.0 120.8 L297.0 129.0 L314.5 160.0 L317.6 191.0" fill="none" stroke="#d4d4d2" stroke-width="3.8" stroke-linejoin="round" stroke-linecap="round"/><path d="M305 162 Q310 160 316 162 Q322 160 328 162 Q330 166 328 170 Q330 176 316 178.5 Q302 176 304 170 Q302 166 305 162 Z" fill="#fff" stroke="#333" stroke-width="0.8"/><text x="316" y="173.5" font-size="9" text-anchor="middle" fill="#333" font-family="Liberation Sans">43</text><text transform="translate(71,145) rotate(-29)" font-family="Liberation Sans" fill="#5c5d61" font-size="12" letter-spacing="0.6">W Mobile St</text><text transform="translate(115,175) rotate(-27)" font-family="Liberation Sans" fill="#5c5d61" font-size="12" letter-spacing="0.6">W College St</text><text transform="translate(137,11) rotate(62)" font-family="Liberation Sans" fill="#5c5d61" font-size="12" letter-spacing="0.6">N Lo</text><text transform="translate(190,18) rotate(60)" font-family="Liberation Sans" fill="#5c5d61" font-size="12" letter-spacing="0.6">N Cedar St</text><text transform="translate(256,23) rotate(-28)" font-family="Liberation Sans" fill="#5c5d61" font-size="12" letter-spacing="0.6">E Tuscan</text><text x="268.5" y="59" font-family="Liberation Sans" fill="#262626" font-size="17.5" letter-spacing="2.3">Florence</text><defs><linearGradient id="tg" x1="0" y1="0" x2="1" y2="0"><stop offset="0" stop-color="#c8c8c8"/><stop offset="0.45" stop-color="#ffffff"/><stop offset="1" stop-color="#9a9a9a"/></linearGradient></defs><path d="M160.9 79.5 L180.9 79.5 L170.9 104.5 Z" fill="url(#tg)" stroke="#8a8a8a" stroke-width="0.8"/><path d="M170.4 19.799999999999997 L203.10000000000002 52.5 L170.4 85.2 L137.7 52.5 Z" fill="#000" stroke="#8a8a8a" stroke-width="1.6"/><path d="M170.4 21.799999999999997 L201.10000000000002 52.5 L170.4 83.2 L139.7 52.5 Z" fill="none" stroke="#fff" stroke-width="0.8"/><ellipse cx="170.4" cy="41.5" rx="4.6" ry="3" fill="#fff"/><rect x="165.8" y="48.3" width="9.2" height="18.5" fill="#fff"/></g></svg>
<div style="left:1121px;top:380px;width:340px;height:20px;background:#142433"></div>
<div class="t" style="left:1127.50px;top:370px;font-size:14px;line-height:40px;height:40px;color:#fff;letter-spacing:-0.276px;">Esri, NASA, NGA, USGS, FEMA...</div>
<div class="t" style="left:1348.30px;top:370px;font-size:14px;line-height:40px;height:40px;color:#fff;font-weight:700;letter-spacing:-0.286px;">Powered by Esri</div>
<svg style="position:absolute;left:1136px;top:412px" width="30" height="28" viewBox="0 0 30 28"><path d="M14.9 3.3 L27 25 H2.8 Z" fill="none" stroke="#fff" stroke-width="2.3" stroke-linejoin="round"/><path d="M14.9 9 L23.4 23 H6.3 Z" fill="#fff"/></svg>
<div class="t" style="left:1171.40px;top:408px;font-size:17.9px;line-height:40px;height:40px;color:#fff;font-weight:700;letter-spacing:-0.067px;">(14)</div>
<svg style="position:absolute;left:1240px;top:413px" width="20" height="26" viewBox="0 0 20 26"><ellipse cx="9.9" cy="6.5" rx="4.9" ry="5.8" fill="#7b8690"/><path d="M0.8 25.7 V22 Q0.8 14 9.9 14 Q19 14 19 22 V25.7 Z" fill="#7b8690"/></svg>
<svg style="position:absolute;left:1296px;top:415px" width="30" height="22" viewBox="0 0 30 22"><path d="M6.5 1 H21.5 L25 8.5 H3 Z" fill="#7b8690"/><path d="M8.2 3 H19.8 L22.3 7.6 H5.7 Z" fill="#142433"/><rect x="0.5" y="4.8" width="4" height="2.6" rx="1" fill="#7b8690"/><rect x="23.5" y="4.8" width="4" height="2.6" rx="1" fill="#7b8690"/><rect x="2" y="8" width="24" height="10.5" rx="2.5" fill="#7b8690"/><rect x="4" y="11.2" width="5" height="1.8" fill="#142433"/><rect x="19" y="11.2" width="5" height="1.8" fill="#142433"/><rect x="2.5" y="16" width="5.5" height="5" rx="1.5" fill="#7b8690"/><rect x="20" y="16" width="5.5" height="5" rx="1.5" fill="#7b8690"/></svg>
<div style="left:1121px;top:453px;width:340px;height:1px;background:#2d3b4a"></div>
<div style="left:1121px;top:450px;width:97px;height:3px;background:#0a84c2"></div>
<div class="t" style="left:1150.00px;top:462px;font-size:17.2px;line-height:40px;height:40px;color:#fff;font-weight:700;letter-spacing:-0.224px;">Hazards and Premise Information (0)</div>
<div style="left:1136px;top:511px;width:325px;height:1px;background:#2d3b4a"></div>
<div class="t" style="left:1150.00px;top:675px;font-size:17.2px;line-height:40px;height:40px;color:#fff;font-weight:700;letter-spacing:-0.226px;">Prior incidents (14)</div>
<div style="left:1121px;top:730px;width:340px;height:132px;overflow:hidden">
<div class="t" style="left:40.00px;top:9px;font-size:17.2px;line-height:40px;height:40px;color:#fff;font-weight:700;letter-spacing:-0.400px;">Type</div>
<div class="t" style="left:165.30px;top:9px;font-size:17.2px;line-height:40px;height:40px;color:#fff;font-weight:700;letter-spacing:-0.600px;">Disposition</div>
<div class="t" style="left:302.30px;top:9px;font-size:16.7px;line-height:40px;height:40px;color:#fff;font-weight:700;">Time</div>
<div style="left:24.700000000000045px;top:54px;width:320px;height:1px;background:#5b6875"></div>
<div class="t" style="left:43.70px;top:60px;font-size:18.3px;line-height:40px;height:40px;color:#1a8cc6;text-decoration:underline">Theft</div>
<div class="t" style="left:300.00px;top:60px;font-size:17.5px;line-height:40px;height:40px;color:#fff;">1 day</div>
<div style="left:24.700000000000045px;top:106px;width:320px;height:1px;background:#5b6875"></div>
<div class="t" style="left:43.70px;top:113px;font-size:18.3px;line-height:40px;height:40px;color:#1a8cc6;text-decoration:underline">Theft</div>
<div class="t" style="left:300.00px;top:113px;font-size:17.5px;line-height:40px;height:40px;color:#fff;">2 days</div>
</div>
<div style="left:1126px;top:884px;width:239px;height:5px;background:#a8acb0;border-radius:3px"></div>
<div class="t" style="left:1478.40px;top:92px;font-size:17.2px;line-height:40px;height:40px;color:#fff;font-weight:700;letter-spacing:-0.284px;">Active Incidents (3)</div>
<svg style="position:absolute;left:1739px;top:102px" width="26" height="22" viewBox="0 0 26 22"><g stroke="#fff" stroke-width="2.7" stroke-linecap="round"><path d="M2 1.5 H15.3"/><path d="M2 6.4 H12.5"/><path d="M2 11.4 H8.7"/><path d="M2 16.5 H6.4"/></g><circle cx="18" cy="14" r="7.6" fill="#020912"/><rect x="16.2" y="7.7" width="3.6" height="3" rx="0.9" fill="#fff" transform="rotate(0 18 14)"/><rect x="16.2" y="7.7" width="3.6" height="3" rx="0.9" fill="#fff" transform="rotate(60 18 14)"/><rect x="16.2" y="7.7" width="3.6" height="3" rx="0.9" fill="#fff" transform="rotate(120 18 14)"/><rect x="16.2" y="7.7" width="3.6" height="3" rx="0.9" fill="#fff" transform="rotate(180 18 14)"/><rect x="16.2" y="7.7" width="3.6" height="3" rx="0.9" fill="#fff" transform="rotate(240 18 14)"/><rect x="16.2" y="7.7" width="3.6" height="3" rx="0.9" fill="#fff" transform="rotate(300 18 14)"/><circle cx="18" cy="14" r="5.1" fill="#fff"/><circle cx="18" cy="14" r="1.9" fill="#020912"/></svg>
<svg style="position:absolute;left:1804px;top:99px" width="26" height="26" viewBox="0 0 26 26"><path d="M12.5 1.4 H1.4 V24.6 H24.6 V13.5" fill="none" stroke="#fff" stroke-width="2.8"/><path d="M10.5 15.5 L23 3" stroke="#fff" stroke-width="2.6"/><path d="M14 1.4 H24.6 V12" fill="none" stroke="#fff" stroke-width="2.8"/></svg>
<div style="left:1478px;top:149px;width:360px;height:1px;background:#1c2835"></div>
<div style="left:1478px;top:165px;width:345px;height:177px;background:#142433;border:1px solid #2b3a4a;box-sizing:border-box;border-radius:5px"></div>
<div style="left:1540px;top:166px;width:1px;height:175px;background:#2b3a4a"></div>
<div style="left:1541px;top:280px;width:281px;height:1px;background:#2b3a4a"></div>
<div class="t" style="left:1496.00px;top:162px;font-size:17.6px;line-height:40px;height:40px;color:#fff;font-weight:700;">#1f</div>
<div class="t" style="left:1493.75px;top:218px;font-size:15.3px;line-height:40px;height:40px;color:#b4b9be;font-weight:700;letter-spacing:-0.600px;transform:scaleX(0.8160621761658031);transform-origin:0 0;-webkit-text-stroke:0.3px #b4b9be">Sep 3</div>
<div class="t" style="left:1486.50px;top:236px;font-size:15.3px;line-height:40px;height:40px;color:#b4b9be;font-weight:700;letter-spacing:-0.600px;transform:scaleX(0.8455882352941176);transform-origin:0 0;-webkit-text-stroke:0.3px #b4b9be">2:50 pm</div>
<div style="left:1554px;top:171px;width:30px;height:30px;border:1px solid #5d6b78;box-sizing:border-box;border-radius:6px"></div>
<div class="t" style="left:1564.50px;top:166px;font-size:15.5px;line-height:40px;height:40px;color:#fff;font-weight:700;">3</div>
<div class="t" style="left:1591.70px;top:167px;font-size:17px;line-height:40px;height:40px;color:#fff;font-weight:700;letter-spacing:-0.400px;">PD Accident</div>
<div class="t" style="left:1554.20px;top:201px;font-size:17.2px;line-height:40px;height:40px;color:#fff;letter-spacing:-0.433px;">123 MAIN GATE AVE, PIE (KFD ...</div>
<div style="left:1554px;top:236px;width:136px;height:35px;border:1.5px solid #e8494b;box-sizing:border-box;border-radius:3px"></div>
<div style="left:1557px;top:239px;width:129px;height:29px;background:#c97b00;border-radius:3px"></div>
<svg style="position:absolute;left:1563px;top:246.60000000000002px" width="15" height="14" viewBox="0 0 15 14"><path d="M7.3 0.4 L9.1 5.1 L14.2 5.3 L10.2 8.5 L11.6 13.5 L7.3 10.6 L3 13.5 L4.4 8.5 L0.4 5.3 L5.5 5.1 Z" fill="#061018"/></svg>
<div class="t" style="left:1585.00px;top:234px;font-size:16.2px;line-height:40px;height:40px;color:#061018;font-weight:700;letter-spacing:-0.667px;">KE11</div>
<div class="t" style="left:1635.20px;top:234px;font-size:16.2px;line-height:40px;height:40px;color:#061018;font-weight:700;letter-spacing:-0.467px;">ENRT</div>
<svg style="position:absolute;left:1495.5px;top:297.8px" width="28" height="26" viewBox="0 0 28 26"><path d="M4 4 H24 Q26 4 26 6 V19 Q26 21 24 21 H10.2 L5.8 24.2 V21 H4 Z" fill="#fff"/><path d="M2.5 0.6 H21.2 Q23.2 0.6 23.2 2.6 V16 Q23.2 18 21.2 18 H7.4 L3.2 21.2 V18 H2.5 Q0.5 18 0.5 16 V2.6 Q0.5 0.6 2.5 0.6 Z" fill="#fff" stroke="#142433" stroke-width="1.3"/><path d="M5 5.3 H18.6 M5 9 H18.6 M5 12.8 H13" stroke="#142433" stroke-width="1.9" stroke-linecap="round"/></svg>
<div class="t" style="left:1552.00px;top:282px;font-size:18px;line-height:40px;height:40px;color:#fff;letter-spacing:-0.083px;">comment</div>
<div class="t" style="left:1696.20px;top:234px;font-size:17px;line-height:40px;height:40px;color:#29abe2;letter-spacing:0.400px;text-decoration:underline">+2</div>
<div style="left:1478px;top:357px;width:345px;height:177px;background:#142433;border:1px solid #2b3a4a;box-sizing:border-box;border-radius:5px"></div>
<div style="left:1540px;top:358px;width:1px;height:175px;background:#2b3a4a"></div>
<div style="left:1541px;top:472px;width:281px;height:1px;background:#2b3a4a"></div>
<div class="t" style="left:1497.50px;top:354px;font-size:17.6px;line-height:40px;height:40px;color:#fff;font-weight:700;">#3l</div>
<div class="t" style="left:1493.50px;top:410px;font-size:15.3px;line-height:40px;height:40px;color:#b4b9be;font-weight:700;letter-spacing:-0.600px;transform:scaleX(0.8290155440414507);transform-origin:0 0;-webkit-text-stroke:0.3px #b4b9be">Sep 9</div>
<div class="t" style="left:1486.50px;top:428px;font-size:15.3px;line-height:40px;height:40px;color:#b4b9be;font-weight:700;letter-spacing:-0.600px;transform:scaleX(0.8614232209737828);transform-origin:0 0;-webkit-text-stroke:0.3px #b4b9be">5:58 am</div>
<div style="left:1554px;top:363px;width:30px;height:30px;border:1px solid #5d6b78;box-sizing:border-box;border-radius:6px"></div>
<div class="t" style="left:1564.50px;top:358px;font-size:15.5px;line-height:40px;height:40px;color:#fff;font-weight:700;">4</div>
<div class="t" style="left:1591.70px;top:359px;font-size:17px;line-height:40px;height:40px;color:#fff;font-weight:700;letter-spacing:-0.286px;">Alcohol Offense</div>
<div class="t" style="left:1554.20px;top:393px;font-size:17.2px;line-height:40px;height:40px;color:#fff;letter-spacing:-0.429px;">100 S MAIN ST, SFD (SPD | LS)</div>
<div style="left:1554px;top:428px;width:138px;height:35px;border:1.5px solid #29b0ea;box-sizing:border-box;border-radius:3px"></div>
<div style="left:1557px;top:431px;width:131px;height:29px;background:#2ab0ea;border-radius:3px"></div>
<svg style="position:absolute;left:1563px;top:438.6px" width="15" height="14" viewBox="0 0 15 14"><path d="M7.3 0.4 L9.1 5.1 L14.2 5.3 L10.2 8.5 L11.6 13.5 L7.3 10.6 L3 13.5 L4.4 8.5 L0.4 5.3 L5.5 5.1 Z" fill="#061018"/></svg>
<div class="t" style="left:1585.60px;top:426px;font-size:16.2px;line-height:40px;height:40px;color:#061018;font-weight:700;letter-spacing:0.600px;">104</div>
<div class="t" style="left:1624.40px;top:426px;font-size:16.2px;line-height:40px;height:40px;color:#061018;font-weight:700;letter-spacing:-0.250px;">ARRVD</div>
<div style="left:1478px;top:549px;width:345px;height:177px;background:#142433;border:1px solid #2b3a4a;box-sizing:border-box;border-radius:5px"></div>
<div style="left:1540px;top:550px;width:1px;height:175px;background:#2b3a4a"></div>
<div style="left:1541px;top:664px;width:281px;height:1px;background:#2b3a4a"></div>
<div class="t" style="left:1496.00px;top:546px;font-size:17.6px;line-height:40px;height:40px;color:#fff;font-weight:700;">#6f</div>
<div class="t" style="left:1490.15px;top:602px;font-size:15.3px;line-height:40px;height:40px;color:#b4b9be;font-weight:700;letter-spacing:-0.600px;transform:scaleX(0.841304347826087);transform-origin:0 0;-webkit-text-stroke:0.3px #b4b9be">Sep 16</div>
<div class="t" style="left:1486.35px;top:620px;font-size:15.3px;line-height:40px;height:40px;color:#b4b9be;font-weight:700;letter-spacing:-0.600px;transform:scaleX(0.8511029411764706);transform-origin:0 0;-webkit-text-stroke:0.3px #b4b9be">2:26 pm</div>
<div style="left:1554px;top:555px;width:30px;height:30px;border:1px solid #5d6b78;box-sizing:border-box;border-radius:6px"></div>
<div class="t" style="left:1564.50px;top:550px;font-size:15.5px;line-height:40px;height:40px;color:#fff;font-weight:700;">4</div>
<div class="t" style="left:1591.70px;top:551px;font-size:17px;line-height:40px;height:40px;color:#fff;font-weight:700;letter-spacing:-0.667px;">Fire</div>
<div class="t" style="left:1554.20px;top:585px;font-size:17.2px;line-height:40px;height:40px;color:#fff;letter-spacing:-0.370px;">711 ELM ST, SFD (KFD | KA02)</div>
<div style="left:1554px;top:620px;width:137px;height:35px;border:1.5px solid #e8494b;box-sizing:border-box;border-radius:3px"></div>
<div style="left:1557px;top:623px;width:130px;height:29px;background:#c97b00;border-radius:3px"></div>
<svg style="position:absolute;left:1563px;top:630.5999999999999px" width="15" height="14" viewBox="0 0 15 14"><path d="M7.3 0.4 L9.1 5.1 L14.2 5.3 L10.2 8.5 L11.6 13.5 L7.3 10.6 L3 13.5 L4.4 8.5 L0.4 5.3 L5.5 5.1 Z" fill="#061018"/></svg>
<div class="t" style="left:1584.70px;top:618px;font-size:16.2px;line-height:40px;height:40px;color:#061018;font-weight:700;letter-spacing:0.000px;">KT21</div>
<div class="t" style="left:1636.30px;top:618px;font-size:16.2px;line-height:40px;height:40px;color:#061018;font-weight:700;letter-spacing:-0.600px;">ENRT</div>
<div style="left:-4px;top:926px;width:8px;height:8px;border-radius:50%;background:#1a6fc4"></div>
<div style="left:1857px;top:61px;width:58px;height:869px;background:#142433"></div>
<div style="left:1857px;top:61px;width:1px;height:869px;background:#3a4959"></div>
<svg style="position:absolute;left:1874px;top:126px" width="28" height="28" viewBox="0 0 28 28"><circle cx="10.9" cy="10.9" r="7.75" fill="none" stroke="#fff" stroke-width="3.4"/><path d="M17 17 L24.5 24.6" stroke="#fff" stroke-width="3.5" stroke-linecap="round"/></svg>
<svg style="position:absolute;left:1875px;top:194px" width="28" height="28" viewBox="0 0 28 28"><path d="M0.3 0.5 H25.6 V13 A8.6 8.6 0 0 0 13 25.5 H0.3 Z" fill="#fff"/><path d="M1.5 1.8 L15 15.3 M1.6 8 L8 14.5 L2.2 21.5" stroke="#142433" stroke-width="1.7" fill="none"/><circle cx="18.9" cy="19.5" r="6.1" fill="none" stroke="#fff" stroke-width="2.1"/><circle cx="18.9" cy="19.5" r="2.7" fill="#fff"/></svg>
<svg style="position:absolute;left:1874px;top:263px" width="28" height="23" viewBox="0 0 28 23"><path d="M6 21 Q0.8 21 0.8 15.5 Q0.8 10.5 6 10 Q7 1.5 14 1.3 Q21 1.5 22.5 9.5 Q27.5 10 27.5 15.5 Q27.5 21 22 21 Z" fill="#fff"/><path d="M9.6 14 A4.6 4.6 0 0 1 17.6 11.6 M18.4 15 A4.6 4.6 0 0 1 10.4 17.4" fill="none" stroke="#142433" stroke-width="1.7"/><path d="M16 9.6 L19.6 12.2 L16.2 13.6 Z M12 19.4 L8.4 16.8 L11.8 15.4 Z" fill="#142433"/></svg>
<svg style="position:absolute;left:1873px;top:326px" width="30" height="30" viewBox="0 0 30 30"><circle cx="15" cy="14.8" r="12.5" fill="none" stroke="#fff" stroke-width="3"/><path d="M5.8 17.2 V14 Q5.8 13 7 12.8 L10.8 12.2 L13.5 9 H17.5 L20.5 12.4 Q24.6 12.8 24.6 14.5 V17.2 Z" fill="#fff"/><path d="M12.6 12.1 L14.2 10.2 H15.3 V12.1 Z M16.3 10.2 H17.1 L18.8 12.1 H16.3 Z" fill="#142433"/><circle cx="9.4" cy="17.6" r="2" fill="#fff" stroke="#142433" stroke-width="0.8"/><circle cx="20.6" cy="17.6" r="2" fill="#fff" stroke="#142433" stroke-width="0.8"/></svg>
</body></html>
